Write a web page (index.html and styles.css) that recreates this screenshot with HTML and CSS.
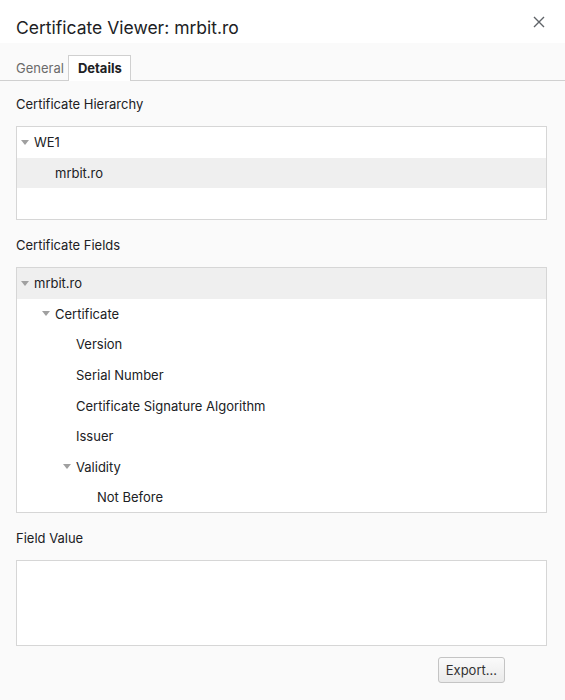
FILE: index.html
```html
<!DOCTYPE html>
<html lang="en">

<head>
    <meta charset="UTF-8">
    <meta name="viewport" content="width=device-width, initial-scale=1.0">
    <title>Certificate Viewer</title>
    <link rel="stylesheet" href="styles.css">
</head>

<body>
    <div class="janela">
        <div class="cabecalho">
            <div class="titulo">Certificate Viewer: mrbit.ro</div>
            <div class="fechar">
                <svg width="12" height="12" viewBox="0 0 12 12">
                    <path d="M1 1 L11 11 M11 1 L1 11" stroke="#5f6368" stroke-width="1.4" fill="none" />
                </svg>
            </div>
        </div>
        <div class="abas">
            <div class="aba">General</div>
            <div class="aba ativa">Details</div>
        </div>
        <div class="conteudo">
            <div class="rotulo">Certificate Hierarchy</div>
            <div class="caixa hierarquia">
                <div class="item nivel0"><span class="seta"></span>WE1</div>
                <div class="item nivel1 selecionado">mrbit.ro</div>
            </div>

            <div class="rotulo">Certificate Fields</div>
            <div class="caixa campos">
                <div class="item nivel0 selecionado"><span class="seta"></span>mrbit.ro</div>
                <div class="item nivel1"><span class="seta"></span>Certificate</div>
                <div class="item nivel2">Version</div>
                <div class="item nivel2">Serial Number</div>
                <div class="item nivel2">Certificate Signature Algorithm</div>
                <div class="item nivel2">Issuer</div>
                <div class="item nivel2"><span class="seta"></span>Validity</div>
                <div class="item nivel3">Not Before</div>
            </div>

            <div class="rotulo">Field Value</div>
            <div class="caixa valor"></div>

            <div class="rodape">
                <div class="botao">Export...</div>
            </div>
        </div>
    </div>
</body>

</html>
```
FILE: styles.css
```css
body {
    margin: 0;
    background-color: #fafafa;
    font-family: Inter, "Liberation Sans", sans-serif;
    color: #202124;
}

.cabecalho {
    background-color: white;
    height: 43px;
    display: flex;
    align-items: center;
    justify-content: space-between;
    padding: 0 20px 0 16px;
}

.titulo {
    font-size: 17.5px;
    padding-top: 12px;
}

.fechar {
    display: flex;
}

.abas {
    display: flex;
    align-items: flex-end;
    padding: 12px 0 0 5px;
    border-bottom: 1px solid #d0d0d0;
}

.aba {
    font-size: 13px;
    color: #6b6b6b;
    padding: 4px 3px 4px 10px;
    border: 1px solid transparent;
    border-bottom: 0;
}

.aba.ativa {
    color: #202124;
    font-weight: 700;
    background-color: white;
    border-color: #d0d0d0;
    margin-bottom: -1px;
    padding: 4px 8px 5px 9px;
}

.conteudo {
    padding: 15px 18px 0 16px;
}

.rotulo {
    font-size: 13px;
    height: 14px;
    margin-bottom: 16px;
}

.caixa {
    background-color: white;
    border: 1px solid #d6d6d6;
    margin-bottom: 17px;
}

.hierarquia {
    height: 92px;
}

.campos {
    height: 244px;
}

.valor {
    height: 84px;
    margin-bottom: 11px;
}

.item {
    height: 30.6px;
    display: flex;
    align-items: center;
    font-size: 13px;
}

.item.selecionado {
    background-color: #efefef;
}

.nivel0 { padding-left: 4px; }
.nivel1 { padding-left: 25px; }
.nivel2 { padding-left: 46px; }
.nivel3 { padding-left: 80px; }

.nivel1:not(:has(.seta)) { padding-left: 38px; }
.nivel2:not(:has(.seta)) { padding-left: 59px; }

/* triangulo cinza do tree view */
.seta {
    width: 0;
    height: 0;
    border-left: 4px solid transparent;
    border-right: 4px solid transparent;
    border-top: 5px solid #a0a0a0;
    margin: 0 5px 0 0;
}

.rodape {
    display: flex;
    justify-content: flex-end;
    padding-right: 42px;
}

.botao {
    font-size: 13px;
    color: #333;
    padding: 4px 7px;
    border: 1px solid #c4c4c4;
    border-radius: 3px;
    background: linear-gradient(#fafafa, #eaeaea);
}
```
